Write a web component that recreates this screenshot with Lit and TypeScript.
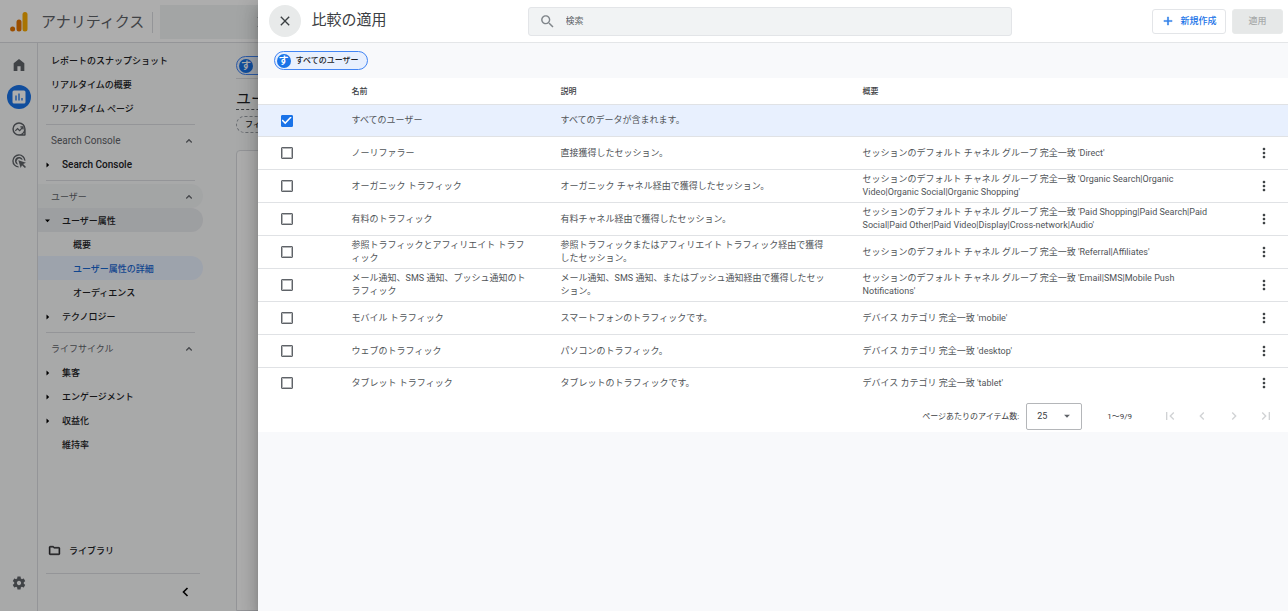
import { LitElement, html, css, svg, nothing } from "lit";
import { customElement, property, state } from "lit/decorators.js";
import { classMap } from "lit/directives/class-map.js";

const fontStack = css`Roboto, "Noto Sans CJK JP", sans-serif`;

const ICONS = {
  home: svg`<path d="M4 21V9.2L12 3l8 6.2V21h-5.6v-7H9.600v7z"/>`,
  explore: svg`<path fill-rule="evenodd" d="M12 2a10 10 0 1 0 0 20h8.500a1.500 1.500 0 0 0 1.500-1.500V12A10 10 0 0 0 12 2zm0 2.200a7.800 7.800 0 1 1 0 15.600 7.800 7.800 0 0 1 0-15.600zm7.800 13.600v2h-2a10 10 0 0 0 2-2z"/><path d="M5.800 14.200l4-4.200 3.200 3 3-3.200h-2V7.900h5v5h-1.800v-1.700L13 15.600l-3.200-3-2.700 2.900z"/>`,
  ads: svg`<path d="M11.700 21.900A10 10 0 1 1 21.900 11.700l-2.200-.6A7.900 7.900 0 1 0 11.100 19.700z"/><path d="M10.300 17.700A6 6 0 1 1 17.700 10.300l-2.500-.7A3.800 3.800 0 1 0 9.600 15.200z"/><path d="M11 11l11.500 3.600-4.300 2 4.300 4.300-1.700 1.700-4.300-4.300-2 4.200z"/>`,
  settings: svg`<path d="M19.140 12.940c.04-.3.06-.61.06-.94 0-.32-.02-.64-.07-.94l2.030-1.580c.18-.14.23-.41.12-.61l-1.920-3.320c-.12-.22-.37-.29-.59-.22l-2.390.96c-.5-.38-1.030-.7-1.620-.94l-.36-2.540c-.04-.24-.24-.41-.48-.41h-3.840c-.24 0-.43.17-.47.41l-.36 2.540c-.59.24-1.130.57-1.620.94l-2.390-.96c-.22-.08-.47 0-.59.22L2.740 8.870c-.12.21-.08.47.12.61l2.030 1.580c-.05.3-.09.63-.09.94s.02.64.07.94l-2.030 1.580c-.18.14-.23.41-.12.61l1.920 3.320c.12.22.37.29.59.22l2.390-.96c.5.38 1.030.7 1.620.94l.36 2.540c.05.24.24.41.48.41h3.840c.24 0 .44-.17.47-.41l.36-2.540c.59-.24 1.130-.56 1.620-.94l2.390.96c.22.08.47 0 .59-.22l1.920-3.320c.12-.22.07-.47-.12-.61l-2.010-1.580zM12 15.200c-1.760 0-3.200-1.440-3.200-3.200s1.440-3.200 3.200-3.200 3.200 1.440 3.200 3.200-1.440 3.200-3.200 3.200z"/>`,
  folder: svg`<path stroke="currentColor" stroke-width=".8" d="M9.170 6l2 2H20v10H4V6h5.170M10 4H4c-1.100 0-1.990.9-1.990 2L2 18c0 1.100.9 2 2 2h16c1.100 0 2-.9 2-2V8c0-1.100-.9-2-2-2h-8l-2-2z"/>`,
  up: svg`<path stroke="currentColor" stroke-width=".8" d="M12 8l-6 6 1.410 1.410L12 10.830l4.590 4.580L18 14z"/>`,
  left: svg`<path d="M15.410 7.410L14 6l-6 6 6 6 1.410-1.410L10.830 12z"/>`,
  right: svg`<path d="M8.590 16.590L13.170 12 8.590 7.410 10 6l6 6-6 6z"/>`,
  first: svg`<path d="M18.410 16.590L13.820 12l4.590-4.590L17 6l-6 6 6 6zM6 6h2v12H6z"/>`,
  last: svg`<path d="M5.590 7.410L10.180 12l-4.590 4.590L7 18l6-6-6-6zM16 6h2v12h-2z"/>`,
  close: svg`<path d="M19 6.410L17.590 5 12 10.590 6.410 5 5 6.410 10.590 12 5 17.590 6.410 19 12 13.410 17.590 19 19 17.590 13.410 12z"/>`,
  add: svg`<path stroke="currentColor" stroke-width=".6" d="M19 13h-6v6h-2v-6H5v-2h6V5h2v6h6z"/>`,
  more: svg`<path d="M12 8c1.100 0 2-.9 2-2s-.9-2-2-2-2 .9-2 2 .9 2 2 2zm0 2c-1.100 0-2 .9-2 2s.9 2 2 2 2-.9 2-2-.9-2-2-2zm0 6c-1.100 0-2 .9-2 2s.9 2 2 2 2-.9 2-2-.9-2-2-2z"/>`,
  search: svg`<path d="M15.500 14h-.79l-.28-.27C15.410 12.590 16 11.110 16 9.500 16 5.910 13.090 3 9.500 3S3 5.910 3 9.500 5.910 16 9.500 16c1.610 0 3.090-.59 4.230-1.570l.27.28v.79l5 4.990L20.490 19l-4.990-5zm-6 0C7.010 14 5 11.990 5 9.500S7.010 5 9.500 5 14 7.010 14 9.500 11.990 14 9.500 14z"/>`,
  unfold: svg`<path d="M12 5.830L15.170 9l1.410-1.410L12 3 7.410 7.590 8.830 9 12 5.830zm0 12.340L8.830 15l-1.410 1.410L12 21l4.590-4.590L15.170 15 12 18.170z"/>`,
  caret: svg`<path d="M7 10l5 5 5-5z"/>`,
};

const icon = (name: keyof typeof ICONS, size = 16) =>
  html`<svg class="icon" width=${size} height=${size} viewBox="0 0 24 24" fill="currentColor" aria-hidden="true">${ICONS[name]}</svg>`;

const shared = css`
  *, *::before, *::after { box-sizing: border-box; }
  button, input, select { font: inherit; color: inherit; margin: 0; }
  button { border: 0; background: none; padding: 0; cursor: pointer; }
  a { color: inherit; text-decoration: none; }
  .icon { display: block; flex: none; }
`;

@customElement("user-chip")
class UserChip extends LitElement {
  @property() label = "";

  static styles = [shared, css`
    :host { display: inline-flex; }
    .chip {
      display: inline-flex; align-items: center; gap: 5px; height: 19px; min-width: 64px;
      padding: 0 8px 0 2px; border: 1px solid #4285f4; border-radius: 10px;
      background: #e8f0fe; color: #202124; white-space: nowrap;
      font: 500 8px/12px ${fontStack};
    }
    .badge {
      display: grid; place-items: center; width: 14px; height: 14px;
      border-radius: 50%; background: #1a73e8; color: #fff;
      font-size: 10px; font-weight: 700;
    }
  `];
  render() {
    return html`<button class="chip"><span class="badge">す</span>${this.label}</button>`;
  }
}

type Entry = {
  label?: string; kind?: "top" | "group" | "item" | "sub" | "rule";
  arrow?: "open" | "closed"; tone?: string; latin?: boolean;
};

const NAV: Entry[] = [
  { kind: "top", label: "レポートのスナップショット" },
  { kind: "top", label: "リアルタイムの概要" },
  { kind: "top", label: "リアルタイム ページ" },
  { kind: "rule" },
  { kind: "group", label: "Search Console", latin: true },
  { kind: "item", label: "Search Console", arrow: "closed", latin: true },
  { kind: "rule" },
  { kind: "group", label: "ユーザー", tone: "soft" },
  { kind: "item", label: "ユーザー属性", arrow: "open", tone: "strong" },
  { kind: "sub", label: "概要" },
  { kind: "sub", label: "ユーザー属性の詳細", tone: "active" },
  { kind: "sub", label: "オーディエンス" },
  { kind: "item", label: "テクノロジー", arrow: "closed" },
  { kind: "rule" },
  { kind: "group", label: "ライフサイクル" },
  { kind: "item", label: "集客", arrow: "closed" },
  { kind: "item", label: "エンゲージメント", arrow: "closed" },
  { kind: "item", label: "収益化", arrow: "closed" },
  { kind: "item", label: "維持率" },
];

@customElement("analytics-shell")
class AnalyticsShell extends LitElement {
  static styles = [shared, css`
    :host {
      display: flex; flex-direction: column; height: 100%; background: #f8f9fa;
      color: #202124; font: 400 9px/12px ${fontStack};
    }
    .bar {
      display: flex; align-items: center; height: 43px; flex: none;
      padding: 2px 0 0 10px; border-bottom: 1px solid #dadce0; background: #fff;
    }
    .product { margin: 0 0 0 13px; font-size: 15px; line-height: 20px; font-weight: 400; color: #5f6368; white-space: nowrap; }
    .divider { width: 1px; height: 21px; margin: 0 7px 0 8px; background: #dadce0; }
    .account {
      display: flex; align-items: center; width: 110px; height: 34px;
      padding-left: 90px; background: #f1f3f4; color: #5f6368;
    }
    .body { display: flex; flex: 1; min-height: 0; }
    .rail {
      display: flex; flex-direction: column; align-items: center; gap: 8px;
      width: 38px; padding: 10px 0 16px; border-right: 1px solid #dadce0; color: #5f6368;
    }
    .rail a { display: grid; place-items: center; width: 24px; height: 24px; border-radius: 50%; }
    .rail .current { background: #1a73e8; color: #fff; }
    .rail .bottom { margin-top: auto; }
    .nav { display: flex; flex-direction: column; width: 198px; padding-top: 5px; font-weight: 500; }
    .row {
      display: flex; align-items: center; width: 165px; height: 24px; flex: none;
      padding: 1px 8px 0 13px; border-radius: 0 12px 12px 0; white-space: nowrap; text-align: left;
    }
    .item { padding-left: 7px; }
    .sub { padding-left: 35px; }
    .group { justify-content: space-between; color: #5f6368; font-weight: 400; }
    .latin { font-size: 10px; }
    .soft { background: #f1f3f4; }
    .strong { background: #e8eaed; }
    .active { background: #e8f0fe; color: #1967d2; }
    .arrow { display: block; width: 17px; flex: none; color: #000; }
    .rule { height: 1px; margin: 4px 41px 3px 8px; border: 0; background: #dadce0; flex: none; }
    .foot { margin-top: auto; }
    .library { gap: 8px; padding-left: 10px; }
    .foot .rule { margin: 11px 36px 11px 8px; }
    .collapse { display: block; margin: 0 0 12px 140px; color: #000; }
    .main { flex: 1; min-width: 0; padding-top: 13px; display: flex; flex-direction: column; align-items: flex-start; }
    .chips { align-self: stretch; height: 23px; border-bottom: 1px solid #dadce0; }
    .title { margin: 10px 0 0; border-bottom: 1px dashed #5f6368; font-size: 15px; line-height: 20px; font-weight: 400; }
    .filter {
      margin-top: 6px; height: 17px; padding: 0 8px; border: 1px dashed #9aa0a6;
      border-radius: 9px; font-size: 8px; font-weight: 500;
    }
    .card { flex: 1; align-self: stretch; margin-top: 17px; border: 1px solid #dadce0; border-radius: 4px 0 0 0; background: #fff; }
  `];

  private entry(e: Entry) {
    if (e.kind === "rule") return html`<hr class="rule" />`;
    const classes = classMap({ row: true, [e.kind!]: true, [e.tone ?? "plain"]: true, latin: !!e.latin });
    if (e.kind === "group") return html`<button class=${classes}>${e.label}${icon("up", 12)}</button>`;
    const arrow = e.kind === "item"
      ? html`<span class="arrow">${e.arrow
          ? html`<svg class="icon" width="6" height="6" viewBox="0 0 6 6" fill="currentColor"><path d=${e.arrow === "open" ? "M0 1.500h5L2.500 4.200z" : "M1.500 .5v5L4.200 3z"} /></svg>`
          : nothing}</span>`
      : nothing;
    return html`<a href="#" class=${classes}>${arrow}${e.label}</a>`;
  }

  render() {
    return html`
      <header class="bar">
        <svg class="icon" width="18" height="20" viewBox="0 0 18 20" aria-hidden="true">
          <rect x="12.500" y="0" width="5" height="19.500" rx="2.500" fill="#f9ab00" />
          <rect x="6.500" y="7.500" width="5" height="12" rx="2.500" fill="#e37400" />
          <circle cx="2.600" cy="17" r="2.500" fill="#e37400" />
        </svg>
        <h1 class="product">アナリティクス</h1>
        <span class="divider"></span>
        <button class="account" aria-label="アカウント">${icon("unfold", 24)}</button>
      </header>
      <div class="body">
        <nav class="rail">
          <a href="#" aria-label="ホーム">${icon("home")}</a>
          <a href="#" class="current" aria-label="レポート">
            <svg class="icon" width="14" height="14" viewBox="0 0 14 14" aria-hidden="true">
              <rect x=".5" y=".5" width="13" height="13" rx="1.500" fill="#fff" />
              <path d="M4 5.500V10.500M7 3.500V10.500M10 8V10.500" stroke="#1a73e8" stroke-width="1.300" />
            </svg>
          </a>
          <a href="#" aria-label="探索">${icon("explore")}</a>
          <a href="#" aria-label="広告">${icon("ads")}</a>
          <a href="#" class="bottom" aria-label="管理">${icon("settings")}</a>
        </nav>
        <nav class="nav">
          ${NAV.map((e) => this.entry(e))}
          <div class="foot">
            <a href="#" class="row library">${icon("folder", 13)}ライブラリ</a>
            <hr class="rule" />
            <button class="collapse" aria-label="閉じる">
              <svg class="icon" width="14" height="14" viewBox="0 0 14 14" fill="none" stroke="currentColor" stroke-width="1.600"><path d="M9.500 3L5.500 7l4 4" /></svg>
            </button>
          </div>
        </nav>
        <main class="main">
          <div class="chips"><user-chip></user-chip></div>
          <h2 class="title">ユーザー属性</h2>
          <button class="filter">フィルタを追加</button>
          <section class="card"></section>
        </main>
      </div>
    `;
  }
}

type Comparison = { name: string; about: string; rule: string; locked?: boolean };

const GROUP = "セッションのデフォルト チャネル グループ 完全一致 ";
const ROWS: Comparison[] = [
  { name: "すべてのユーザー", about: "すべてのデータが含まれます。", rule: "", locked: true },
  { name: "ノーリファラー", about: "直接獲得したセッション。", rule: GROUP + "'Direct'" },
  { name: "オーガニック トラフィック", about: "オーガニック チャネル経由で獲得したセッション。", rule: GROUP + "'Organic Search|Organic Video|Organic Social|Organic Shopping'" },
  { name: "有料のトラフィック", about: "有料チャネル経由で獲得したセッション。", rule: GROUP + "'Paid Shopping|Paid Search|Paid Social|Paid Other|Paid Video|Display|Cross-network|Audio'" },
  { name: "参照トラフィックとアフィリエイト トラフィック", about: "参照トラフィックまたはアフィリエイト トラフィック経由で獲得したセッション。", rule: GROUP + "'Referral|Affiliates'" },
  { name: "メール通知、SMS 通知、プッシュ通知のトラフィック", about: "メール通知、SMS 通知、またはプッシュ通知経由で獲得したセッション。", rule: GROUP + "'Email|SMS|Mobile Push Notifications'" },
  { name: "モバイル トラフィック", about: "スマートフォンのトラフィックです。", rule: "デバイス カテゴリ 完全一致 'mobile'" },
  { name: "ウェブのトラフィック", about: "パソコンのトラフィック。", rule: "デバイス カテゴリ 完全一致 'desktop'" },
  { name: "タブレット トラフィック", about: "タブレットのトラフィックです。", rule: "デバイス カテゴリ 完全一致 'tablet'" },
];

@customElement("comparison-table")
class ComparisonTable extends LitElement {
  @property({ attribute: false }) rows: Comparison[] = [];
  @state() private picked = new Set<number>([0]);

  static styles = [shared, css`
    :host { display: block; background: #fff; color: #505458; font: 400 9px/13px ${fontStack}; }
    table { width: 100%; border-collapse: separate; border-spacing: 0; table-layout: fixed; line-break: loose; }
    .c-check { width: 94px; }
    .c-name { width: 209px; }
    .c-about { width: 302px; }
    .c-menu { width: 48px; }
    th, td { padding: 0; text-align: left; vertical-align: middle; border-bottom: 1px solid #e0e2e5; }
    th { height: 27px; font-size: 8px; font-weight: 500; color: #3c4043; }
    td { height: 33px; }
    .picked td, tbody tr:last-child td { height: 32px; }
    .picked td { background: #e8f0fe; }
    tbody tr:last-child td { border-bottom: 0; padding-bottom: 2px; }
    .name { padding-right: 30px; }
    .about { padding-right: 34px; }
    .rule { padding-right: 12px; }
    .tick { padding-left: 23px; }
    .box {
      appearance: none; display: grid; place-items: center; width: 12px; height: 12px;
      border: 1px solid #5f6368; border-radius: 1px; outline: 0; box-shadow: inset 0 0 0 1px #b4b6b8;
    }
    .box:checked { border-color: #1a73e8; background: #1a73e8; box-shadow: none; }
    .box:checked::before {
      content: ""; width: 10px; height: 8px; background: #fff;
      clip-path: polygon(0 50%, 11% 36%, 36% 70%, 89% 0, 100% 12%, 36% 98%);
    }
    .menu { display: grid; place-items: center; width: 16px; height: 16px; margin-left: 16px; color: #3c4043; }
    .pager { display: flex; align-items: center; justify-content: flex-end; height: 32px; padding-right: 6px; font-size: 8px; color: #3c4043; }
    .size { position: relative; display: flex; align-items: center; margin: 0 25px 0 7px; }
    .size select {
      appearance: none; width: 56px; height: 27px; padding: 0 10px; border: 1px solid #b4b6b9;
      border-radius: 2px; background: #fff; font-size: 9px;
    }
    .size .icon { position: absolute; right: 8px; pointer-events: none; color: #5f6368; }
    .range { margin-right: 22px; }
    .step { display: grid; place-items: center; width: 32px; height: 24px; color: #d0d2d4; }
  `];

  private toggle(i: number) {
    const next = new Set(this.picked);
    next.has(i) ? next.delete(i) : next.add(i);
    this.picked = next;
  }

  render() {
    return html`
      <table>
        <colgroup><col class="c-check" /><col class="c-name" /><col class="c-about" /><col /><col class="c-menu" /></colgroup>
        <thead>
          <tr><th></th><th scope="col">名前</th><th scope="col">説明</th><th scope="col">概要</th><th></th></tr>
        </thead>
        <tbody>
          ${this.rows.map((r, i) => html`
            <tr class=${classMap({ picked: this.picked.has(i) })}>
              <td class="tick"><input class="box" type="checkbox" aria-label=${r.name} .checked=${this.picked.has(i)} @change=${() => this.toggle(i)} /></td>
              <td class="name">${r.name}</td>
              <td class="about">${r.about}</td>
              <td class="rule">${r.rule}</td>
              <td>${r.locked ? nothing : html`<button class="menu" aria-label="その他">${icon("more")}</button>`}</td>
            </tr>`)}
        </tbody>
      </table>
      <div class="pager">
        <label for="size">ページあたりのアイテム数:</label>
        <span class="size"><select id="size"><option>25</option><option>50</option></select>${icon("caret", 14)}</span>
        <span class="range">1〜9/9</span>
        <button class="step" disabled aria-label="最初">${icon("first")}</button>
        <button class="step" disabled aria-label="前へ">${icon("left")}</button>
        <button class="step" disabled aria-label="次へ">${icon("right")}</button>
        <button class="step" disabled aria-label="最後">${icon("last")}</button>
      </div>
    `;
  }
}

@customElement("app-root")
class AppRoot extends LitElement {
  static styles = [shared, css`
    :host { display: block; position: relative; height: 100vh; overflow: hidden; font: 400 9px/13px ${fontStack}; }
    .scrim { position: absolute; inset: 0; background: rgba(0, 0, 0, 0.32); }
    .drawer {
      position: absolute; top: 0; right: 0; bottom: 0; width: 80%;
      display: flex; flex-direction: column; background: #f8f9fb;
      box-shadow: 0 5px 7px -3px rgba(0, 0, 0, 0.2), 0 11px 16px 1px rgba(0, 0, 0, 0.14), 0 4px 20px 3px rgba(0, 0, 0, 0.12);
    }
    .head { display: flex; align-items: center; height: 43px; flex: none; border-bottom: 1px solid #e4e6e8; background: #fff; }
    .close { display: grid; place-items: center; width: 32px; height: 32px; margin-left: 11px; border-radius: 50%; background: #e8eaea; color: #3c4043; }
    .title { width: 216px; margin: 0 0 3px 11px; font-size: 15px; line-height: 20px; font-weight: 400; color: #3c4043; }
    .search {
      display: flex; align-items: center; gap: 10px; width: 47%; height: 29px; padding: 0 10px;
      border: 1px solid #e3e5e8; border-radius: 3px; background: #f1f3f4; color: #80868b;
    }
    .search input { flex: 1; min-width: 0; border: 0; outline: 0; padding: 0; background: none; color: #202124; }
    .search input::placeholder { color: #5f6368; opacity: 1; }
    .actions { display: flex; gap: 6px; margin: 0 5px 0 auto; }
    .create, .apply { display: flex; align-items: center; justify-content: center; height: 25px; border-radius: 3px; }
    .create { gap: 5px; width: 74px; border: 1px solid #e3e5e8; color: #1a73e8; font-weight: 500; }
    .apply { width: 51px; border: 1px solid #e8eaea; background: #e6e8e8; color: #a8abab; font-weight: 500; }
    .chips { display: flex; align-items: center; height: 35px; flex: none; padding-left: 16px; }
  `];

  render() {
    return html`
      <analytics-shell></analytics-shell>
      <div class="scrim"></div>
      <section class="drawer" role="dialog" aria-labelledby="title">
        <header class="head">
          <button class="close" aria-label="閉じる">${icon("close")}</button>
          <h2 class="title" id="title">比較の適用</h2>
          <label class="search">${icon("search", 17)}<input type="text" placeholder="検索" aria-label="検索" /></label>
          <div class="actions">
            <button class="create">${icon("add", 14)}新規作成</button>
            <button class="apply" disabled>適用</button>
          </div>
        </header>
        <div class="chips"><user-chip label="すべてのユーザー"></user-chip></div>
        <comparison-table .rows=${ROWS}></comparison-table>
      </section>
    `;
  }
}
